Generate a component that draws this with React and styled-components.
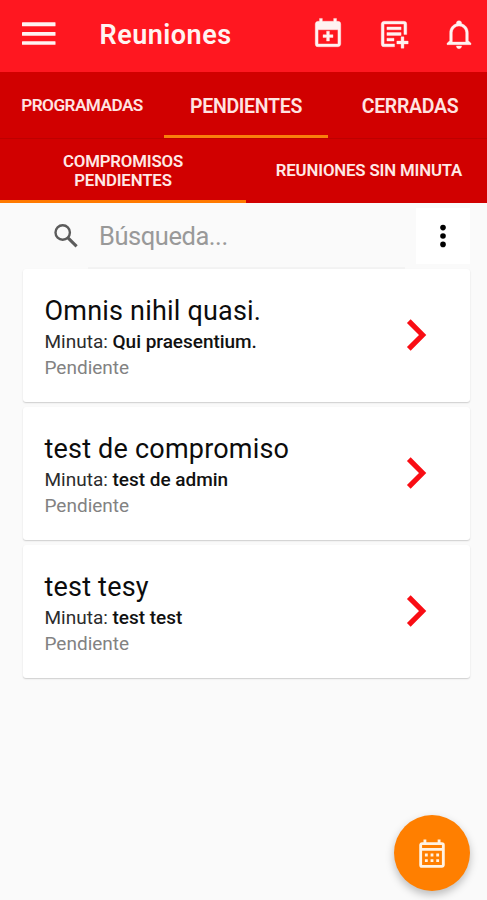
import React, { useState } from 'react';
import styled, { createGlobalStyle } from 'styled-components';

const meetings = [
  { id: 1, title: 'Omnis nihil quasi.', minuta: 'Qui praesentium.', status: 'Pendiente' },
  { id: 2, title: 'test de compromiso', minuta: 'test de admin', status: 'Pendiente' },
  { id: 3, title: 'test tesy', minuta: 'test test', status: 'Pendiente' },
];

const MenuIcon = () => (
  <svg width='34' height='24' viewBox='0 0 34 24' fill='currentColor'>
    <rect x='0' y='0.2' width='33.5' height='4' rx='0.5' />
    <rect x='0' y='9.9' width='33.5' height='3.8' rx='0.5' />
    <rect x='0' y='19.2' width='33.5' height='3.6' rx='0.5' />
  </svg>
);

const AddEventIcon = () => (
  <svg width='34' height='34' viewBox='0 0 24 24' fill='currentColor'>
    <path d='M19 19V9H5v10h14M16 1h2v2h1a2 2 0 0 1 2 2v14c0 1.11-.89 2-2 2H5a2 2 0 0 1-2-2V5c0-1.11.89-2 2-2h1V1h2v2h8V1m-5 9h2v2.5h2.5v2H13V17h-2v-2.5H8.5v-2H11V10Z' />
  </svg>
);

const AddNoteIcon = () => (
  <svg width='34' height='34' viewBox='0 0 24 24' fill='currentColor'>
    <path d='M12.4 19v2H5a2 2 0 0 1-2-2V5c0-1.1.9-2 2-2h14a2 2 0 0 1 2 2v7.3h-2V5H5v14h7.4M12 17H7v-2h5v2m5-4H7v-2h10v2m0-4H7V7h10v2m0 5h2v3h3v2h-3v3h-2v-3h-3v-2h3v-3Z' />
  </svg>
);

const BellIcon = () => (
  <svg width='32' height='32' viewBox='0 0 24 24' fill='currentColor'>
    <path d='M10 21h4c0 1.1-.9 2-2 2s-2-.9-2-2m11-2v1H3v-1l2-2v-6c0-3.1 2.03-5.83 5-6.71V4a2 2 0 0 1 4 0v.29c2.97.88 5 3.61 5 6.71v6l2 2m-4-8a5 5 0 0 0-10 0v7h10v-7Z' />
  </svg>
);

const SearchIcon = () => (
  <svg width='26' height='26' viewBox='0 0 26 26' fill='none' stroke='currentColor'>
    <circle cx='9.7' cy='9.5' r='7.2' strokeWidth='2.4' />
    <path d='M15 14.8L23.6 23.3' strokeWidth='3.1' />
  </svg>
);

const MoreIcon = () => (
  <svg width='8' height='24' viewBox='0 0 8 24' fill='currentColor'>
    <circle cx='4' cy='3.6' r='2.8' />
    <circle cx='4' cy='12' r='2.8' />
    <circle cx='4' cy='20.4' r='2.8' />
  </svg>
);

const ChevronIcon = () => (
  <svg width='22' height='34' viewBox='0 0 22 34' fill='none' stroke='currentColor'>
    <path d='M2.8 3.1L16.6 17L2.8 30.9' strokeWidth='5.2' />
  </svg>
);

const CalendarIcon = () => (
  <svg width='34' height='34' viewBox='0 0 24 24' fill='currentColor'>
    <path d='M7 11h2v2H7v-2m14-6v14c0 1.11-.89 2-2 2H5a2 2 0 0 1-2-2V5c0-1.1.9-2 2-2h1V1h2v2h8V1h2v2h1a2 2 0 0 1 2 2M5 7h14V5H5v2m14 12V9H5v10h14m-4-6v-2h2v2h-2m-4 0v-2h2v2h-2m-4 2h2v2H7v-2m8 2v-2h2v2h-2m-4 0v-2h2v2h-2Z' />
  </svg>
);

const App = () => {
  const [tab, setTab] = useState('pendientes');
  const [subTab, setSubTab] = useState('compromisos');
  const [search, setSearch] = useState('');

  // Only show the meetings that match the search text
  const filtered = meetings.filter(({ title }) =>
    title.toLowerCase().includes(search.toLowerCase())
  );

  return (
    <React.Fragment>
      <GlobalStyle />
      <Screen>
        <AppBar>
          <IconButton aria-label='Menú'>
            <MenuIcon />
          </IconButton>
          <Title>Reuniones</Title>
          <Actions>
            <IconButton aria-label='Nueva reunión'>
              <AddEventIcon />
            </IconButton>
            <IconButton aria-label='Nueva minuta'>
              <AddNoteIcon />
            </IconButton>
            <IconButton aria-label='Notificaciones'>
              <BellIcon />
            </IconButton>
          </Actions>
        </AppBar>

        <Tabs>
          <Tab $small $active={tab === 'programadas'} onClick={() => setTab('programadas')}>
            PROGRAMADAS
          </Tab>
          <Tab $active={tab === 'pendientes'} onClick={() => setTab('pendientes')}>
            PENDIENTES
          </Tab>
          <Tab $active={tab === 'cerradas'} onClick={() => setTab('cerradas')}>
            CERRADAS
          </Tab>
        </Tabs>

        <SubTabs>
          <SubTab $active={subTab === 'compromisos'} onClick={() => setSubTab('compromisos')}>
            COMPROMISOS
            <br />
            PENDIENTES
          </SubTab>
          <SubTab $active={subTab === 'sinMinuta'} onClick={() => setSubTab('sinMinuta')}>
            REUNIONES SIN MINUTA
          </SubTab>
        </SubTabs>

        <SearchRow>
          <SearchIcon />
          <SearchField>
            <input
              placeholder='Búsqueda...'
              value={search}
              onChange={(e) => setSearch(e.target.value)}
            />
          </SearchField>
          <MoreButton aria-label='Más opciones'>
            <MoreIcon />
          </MoreButton>
        </SearchRow>

        <List>
          {filtered.map(({ id, title, minuta, status }) => (
            <Card key={id}>
              <div>
                <h2>{title}</h2>
                <p>
                  Minuta: <strong>{minuta}</strong>
                </p>
                <Status>{status}</Status>
              </div>
              <ChevronIcon />
            </Card>
          ))}
        </List>

        <Fab aria-label='Calendario'>
          <CalendarIcon />
        </Fab>
      </Screen>
    </React.Fragment>
  );
};

export default App;

const GlobalStyle = createGlobalStyle`
  * {
    box-sizing: border-box;
  }
  body {
    margin: 0;
    background: #fafafa;
    font-family: Roboto, sans-serif;
  }
  button {
    border: none;
    padding: 0;
    background: none;
    font-family: inherit;
    cursor: pointer;
  }
  svg {
    display: block;
    flex-shrink: 0;
  }
`;

const Screen = styled.div`
  position: relative;
  width: 487px;
  height: 900px;
  overflow: hidden;
  background: #fafafa;
`;

const AppBar = styled.header`
  display: flex;
  align-items: center;
  height: 72px;
  padding: 0 12px 4px 22px;
  background: #ff1720;
  color: #fff3f1;
`;

const IconButton = styled.button`
  color: inherit;

  path {
    stroke: currentColor;
    stroke-width: 0.25;
  }
`;

const Title = styled.h1`
  margin: 1px 0 0 43.5px;
  font-size: 27px;
  font-weight: 600;
  letter-spacing: 0.5px;
`;

const Actions = styled.div`
  display: flex;
  align-items: center;
  gap: 32px;
  margin-left: auto;
`;

const Tabs = styled.nav`
  display: grid;
  grid-template-columns: 164px 164px 164px;
  height: 66px;
  background: #d10000;
`;

const Tab = styled.button`
  padding-top: ${({ $small }) => ($small ? '3px' : '5px')};
  border-bottom: 3px solid ${({ $active }) => ($active ? '#f97f0c' : 'transparent')};
  color: #ffe4e2;
  font-size: ${({ $small }) => ($small ? '17.2px' : '19.5px')};
  font-weight: 600;
  letter-spacing: ${({ $small }) => ($small ? '-0.55px' : '-0.3px')};
`;

const SubTabs = styled.nav`
  display: grid;
  grid-template-columns: 246px 246px;
  height: 65px;
  border-top: 1px solid #bd0000;
  background: #d10000;
`;

const SubTab = styled.button`
  padding-top: 3px;
  border-bottom: 3px solid ${({ $active }) => ($active ? '#ff7a00' : 'transparent')};
  color: #ffe9e6;
  font-size: 16.8px;
  font-weight: 600;
  line-height: 19.5px;
  letter-spacing: -0.15px;
`;

const SearchRow = styled.div`
  display: flex;
  align-items: center;
  height: 66px;
  padding: 0 17px 0 53px;
  color: #5c5c5c;
`;

const SearchField = styled.label`
  display: flex;
  align-items: center;
  align-self: stretch;
  width: 317px;
  margin-left: 9px;
  border-bottom: 2px solid #f3f3f3;

  input {
    width: 100%;
    padding: 2px 0 0 11px;
    border: none;
    outline: none;
    background: none;
    color: #222;
    font-family: inherit;
    font-size: 25.5px;
    letter-spacing: -0.45px;
  }
  input::placeholder {
    color: #999;
    opacity: 1;
  }
`;

const MoreButton = styled.button`
  display: flex;
  align-items: center;
  justify-content: center;
  width: 54px;
  height: 56px;
  margin-left: auto;
  background: #fff;
  color: #000;
`;

const List = styled.main`
  display: flex;
  flex-direction: column;
  gap: 5px;
  padding: 0 17px 0 23px;
`;

const Card = styled.article`
  display: flex;
  align-items: center;
  justify-content: space-between;
  height: 133px;
  padding: 4px 42px 0 21.5px;
  border-radius: 3px;
  background: #fff;
  box-shadow: 0 1px 1.5px rgba(0, 0, 0, 0.18);
  color: #f90d14;

  h2 {
    margin: 0 0 2px;
    color: #0c0c0c;
    font-size: 27px;
    font-weight: 450;
    line-height: 32px;
    letter-spacing: 0.2px;
  }
  p {
    margin: 0;
    color: #2c2c2c;
    font-size: 19px;
    line-height: 26px;
  }
  strong {
    color: #111;
    font-weight: 500;
    letter-spacing: -0.03px;
  }
  svg {
    margin-bottom: 6px;
  }
`;

const Status = styled.p`
  && {
    color: #828282;
  }
`;

const Fab = styled.button`
  position: absolute;
  right: 17px;
  bottom: 9px;
  display: flex;
  align-items: center;
  justify-content: center;
  width: 76px;
  height: 76px;
  padding-top: 4px;
  border-radius: 50%;
  background: #ff7f00;
  box-shadow: 0 4px 8px rgba(0, 0, 0, 0.25);
  color: #fff3e4;
`;
